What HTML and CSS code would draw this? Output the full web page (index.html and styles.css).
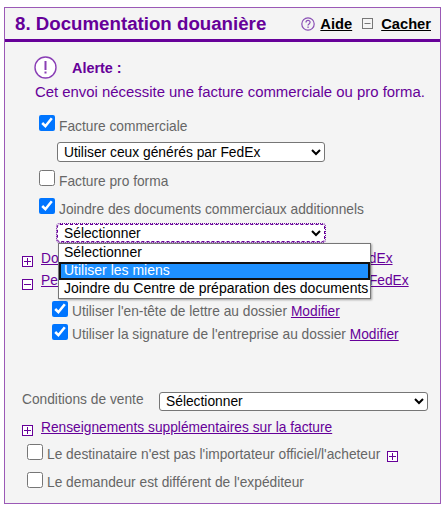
FILE: index.html
```html
<!DOCTYPE html>
<html lang="fr">

    <head>
        <meta name="viewport" content="width=device-width, initial-scale=1">
        <title>Documentation douanière</title>
        <link rel="stylesheet" href="styles.css">
    </head>

    <body>
        <section class="panel">
            <header class="panel-head">
                <h1>8. Documentation douanière</h1>
                <svg class="head-icon" width="14" height="14" viewBox="0 0 14 14" aria-hidden="true">
                    <circle cx="7" cy="7" r="6.2" fill="none" stroke="#8a4fb5" stroke-width="1.2"/>
                    <path d="M5 5.4c0-2.6 4.1-2.6 4.1-.1 0 1.7-2.1 1.6-2.1 3.3" fill="none" stroke="#8a4fb5" stroke-width="1.2"/>
                    <rect x="6.4" y="9.5" width="1.3" height="1.4" fill="#8a4fb5"/>
                </svg>
                <a class="head-link" href="#">Aide</a>
                <svg class="head-icon hide-icon" width="11" height="11" viewBox="0 0 11 11" aria-hidden="true">
                    <rect x="0.5" y="0.5" width="10" height="10" fill="none" stroke="#777"/>
                    <rect x="2.5" y="5" width="6" height="1" fill="#777"/>
                </svg>
                <a class="head-link" href="#">Cacher</a>
            </header>

            <div class="alert">
                <div class="alert-title">
                    <svg width="23" height="23" viewBox="0 0 23 23" aria-hidden="true">
                        <circle cx="11.5" cy="11.5" r="10.5" fill="#fff" stroke="#8a3fb5" stroke-width="1.4"/>
                        <rect x="10.5" y="5" width="2" height="9" fill="#8a3fb5"/>
                        <rect x="10.5" y="15.5" width="2" height="2" fill="#8a3fb5"/>
                    </svg>
                    <strong>Alerte :</strong>
                </div>
                <p>Cet envoi nécessite une facture commerciale ou pro forma.</p>
            </div>

            <div class="docs">
                <label class="check"><input type="checkbox" checked><span>Facture commerciale</span></label>
                <select class="doc-select">
                    <option>Utiliser ceux générés par FedEx</option>
                </select>
                <label class="check gap-row"><input type="checkbox"><span>Facture pro forma</span></label>
                <label class="check gap-row"><input type="checkbox" checked><span>Joindre des documents commerciaux additionnels</span></label>
                <div class="select-wrap">
                    <select class="doc-select focused">
                        <option>Sélectionner</option>
                    </select>
                    <ul class="menu">
                        <li>Sélectionner</li>
                        <li class="active">Utiliser les miens</li>
                        <li>Joindre du Centre de préparation des documents</li>
                    </ul>
                </div>
            </div>

            <div class="expand first">
                <span class="box"><i class="plus"></i></span>
                <a href="#">Documents commerciaux à téléverser générés par FedEx</a>
            </div>
            <div class="expand second">
                <span class="box big"><i></i></span>
                <a href="#">Personnaliser les documents générés et envoyés par FedEx</a>
            </div>
            <label class="check sub first-sub"><input type="checkbox" checked><span>Utiliser l'en-tête de lettre au dossier <a href="#">Modifier</a></span></label>
            <label class="check sub second-sub"><input type="checkbox" checked><span>Utiliser la signature de l'entreprise au dossier <a href="#">Modifier</a></span></label>

            <div class="terms">
                <span>Conditions de vente</span>
                <select class="terms-select">
                    <option>Sélectionner</option>
                </select>
            </div>
            <div class="expand more">
                <span class="box"><i class="plus"></i></span>
                <a href="#">Renseignements supplémentaires sur la facture</a>
            </div>
            <label class="check end first-end"><input type="checkbox"><span>Le destinataire n'est pas l'importateur officiel/l'acheteur</span><b class="box inline"><i class="plus"></i></b></label>
            <label class="check end second-end"><input type="checkbox"><span>Le demandeur est différent de l'expéditeur</span></label>
        </section>
    </body>

</html>
```

FILE: styles.css
```css
:root {
    --purple: #660099;
    --grey: #666;
}

html {
    font-family: "Liberation Sans", Arial, sans-serif;
    font-size: 13.75px;
}

body {
    margin: 0;
    background: #fff;
}

.panel {
    box-sizing: border-box;
    width: 437px;
    height: 497px;
    margin: 7px 0 0 4px;
    border: 1px solid #9b59b6;
    background: #f4f4f4;
    color: var(--grey);
}

.panel-head {
    display: flex;
    align-items: center;
    height: 31px;
    padding: 0 9px 0 10px;
    border-bottom: 3px solid var(--purple);

    & h1 {
        margin: 0 auto 0 0;
        font-size: 18.7px;
        color: var(--purple);
    }
}

.head-link {
    font-weight: bold;
    font-size: 14.7px;
    color: #000;
    margin-left: 5px;
}

.hide-icon {
    margin-left: 10px;
    margin-right: 3px;
}

a {
    color: var(--purple);
}

.alert {
    padding: 14px 0 0 29px;
    color: var(--purple);

    & p {
        margin: 5px 0 0 1px;
        font-size: 14.9px;
    }
}

.alert-title {
    display: flex;
    align-items: center;
    gap: 15px;

    & strong {
        font-size: 14.4px;
    }
}

.docs {
    padding: 15px 0 0 34px;

    & .check>span {
        padding-top: 4px;
    }
}

.check {
    display: flex;
    align-items: flex-start;
    line-height: 16px;

    & input {
        width: 16px;
        height: 16px;
        margin: 0 4px 0 0;
    }

    &>span {
        padding-top: 3px;
    }
}

.doc-select {
    display: block;
    width: 268px;
    height: 20px;
    margin: 7px 0 0 18px;
    padding: 0 0 0 2px;
    font: 13.8px "Liberation Sans", Arial, sans-serif;
    background: #fff;
    color: #000;
    border: 1px solid #767676;
    border-radius: 3px;
}

.gap-row {
    margin-top: 8px;
}

.select-wrap {
    position: relative;
}

.focused {
    height: 18px;
    margin-top: 6px;
    border: 1px dashed var(--purple);
    outline: 1px dotted var(--purple);
}

.menu {
    position: absolute;
    z-index: 2;
    top: 19px;
    left: 19px;
    box-sizing: border-box;
    width: 313px;
    height: 56px;
    margin: 0;
    padding: 0;
    list-style: none;
    background: #fff;
    color: #000;
    border: 1px solid #767676;
    box-shadow: 1px 1px 2px rgba(0, 0, 0, 0.35);
    font-size: 14px;

    & li {
        box-sizing: border-box;
        height: 18px;
        padding: 0 0 1px 5px;
        line-height: 16px;
        white-space: nowrap;
    }

    & .active {
        background: #1e90ff;
        color: #fff;
        outline: 2px solid #111;
        outline-offset: -2px;
    }
}

.expand {
    display: flex;
    align-items: flex-start;
    gap: 8px;
    min-height: 17px;
    padding-left: 17px;
    line-height: 16px;

    & a {
        white-space: nowrap;
    }
}

.first {
    margin-top: 9px;
}

.second {
    min-height: 18px;
    margin-top: 5px;
}

.more {
    margin-top: 9px;
}

.box {
    flex: none;
    position: relative;
    box-sizing: border-box;
    width: 11px;
    height: 11px;
    margin-top: 5px;
    border: 1px solid var(--purple);
    background: #fff;

    & i {
        position: absolute;
        top: 4px;
        left: 1px;
        width: 7px;
        height: 1px;
        background: var(--purple);
    }

    & i.plus::after {
        content: "";
        position: absolute;
        top: -3px;
        left: 3px;
        width: 1px;
        height: 7px;
        background: var(--purple);
    }
}

.big {
    margin-top: 6px;
}

.sub {
    padding-left: 47px;
}

.first-sub {
    margin-top: 10px;
}

.second-sub {
    margin-top: 4px;
}

.terms {
    display: flex;
    align-items: flex-start;
    margin-top: 49px;
    padding-left: 17px;
    line-height: 16px;

    &>span {
        flex: none;
        width: 137px;
    }

    & .terms-select {
        flex: none;
        width: 269px;
        height: 19px;
        padding: 0 0 0 2px;
        font: 13.8px "Liberation Sans", Arial, sans-serif;
        background: #fff;
        color: #000;
        border: 1px solid #767676;
        border-radius: 3px;
    }
}

.end {
    padding-left: 22px;
}

.first-end {
    margin-top: 7px;
}

.second-end {
    margin-top: 9px;
}

.inline {
    margin: 7px 0 0 7px;
}
```
